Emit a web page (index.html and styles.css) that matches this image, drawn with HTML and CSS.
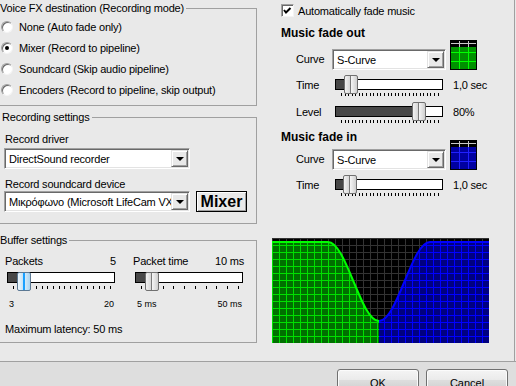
FILE: index.html
```html
<!DOCTYPE html>
<html lang="en">
<head>
    <meta charset="UTF-8">
    <title>Voice FX</title>
    <link rel="stylesheet" href="styles.css">
</head>
<body>
    <div class="dialog">
        <div class="page">
            <div class="left">
                <fieldset class="group voice">
                    <legend>Voice FX destination (Recording mode)</legend>
                    <div class="group-body options">
                        <label class="option"><span class="radio"></span>None (Auto fade only)</label>
                        <label class="option"><span class="radio checked"></span>Mixer (Record to pipeline)</label>
                        <label class="option"><span class="radio"></span>Soundcard (Skip audio pipeline)</label>
                        <label class="option"><span class="radio"></span>Encoders (Record to pipeline, skip output)</label>
                    </div>
                </fieldset>

                <fieldset class="group recording">
                    <legend>Recording settings</legend>
                    <div class="group-body">
                        <div class="field-label">Record driver</div>
                        <div class="combo wide">
                            <span class="combo-text">DirectSound recorder</span>
                            <span class="combo-btn"><i></i></span>
                        </div>
                        <div class="field-label">Record soundcard device</div>
                        <div class="device-row">
                            <div class="combo wide">
                                <span class="combo-text">Μικρόφωνο (Microsoft LifeCam VX-3000)</span>
                                <span class="combo-btn"><i></i></span>
                            </div>
                            <button class="mixer">Mixer</button>
                        </div>
                    </div>
                </fieldset>

                <fieldset class="group buffer">
                    <legend>Buffer settings</legend>
                    <div class="group-body">
                        <div class="buffer-cols">
                            <div class="buffer-col">
                                <div class="buffer-head"><span>Packets</span><span>5</span></div>
                                <div class="slider">
                                    <div class="track"><div class="fill" style="width: 10px"></div></div>
                                    <div class="thumb focus" style="left: 10px"></div>
                                    <div class="ticks" data-count="18"></div>
                                </div>
                                <div class="scale"><span>3</span><span>20</span></div>
                            </div>
                            <div class="buffer-col">
                                <div class="buffer-head"><span>Packet time</span><span>10 ms</span></div>
                                <div class="slider">
                                    <div class="track"><div class="fill" style="width: 10px"></div></div>
                                    <div class="thumb" style="left: 10px"></div>
                                    <div class="ticks" data-count="10"></div>
                                </div>
                                <div class="scale"><span>5 ms</span><span>50 ms</span></div>
                            </div>
                        </div>
                        <div class="latency">Maximum latency: 50 ms</div>
                    </div>
                </fieldset>
            </div>

            <div class="right">
                <label class="check-row">
                    <span class="checkbox">
                        <svg width="11" height="11" viewBox="0 0 11 11"><path d="M2 5l2 2.5L8.5 3" fill="none" stroke="#000" stroke-width="2"/></svg>
                    </span>
                    Automatically fade music
                </label>

                <h2 class="section-title">Music fade out</h2>
                <div class="row curve-row">
                    <span class="row-label">Curve</span>
                    <div class="combo curve">
                        <span class="combo-text">S-Curve</span>
                        <span class="combo-btn"><i></i></span>
                    </div>
                    <svg class="curve-icon" width="27" height="30" viewBox="0 0 27 30">
                        <rect width="27" height="30" fill="#000"/>
                        <rect x="1" y="7" width="25" height="22" fill="#009000"/>
                        <path d="M1 3.5H26M9.5 1V7M18.5 1V7" stroke="#c8c8c8"/>
                        <path d="M1 12.5H26M1 21.5H26M9.5 7V29M18.5 7V29" stroke="#00ff00"/>
                    </svg>
                </div>
                <div class="row slider-row time-out">
                    <span class="row-label">Time</span>
                    <div class="slider">
                        <div class="track"><div class="fill" style="width: 9px"></div></div>
                        <div class="thumb" style="left: 9px"></div>
                        <div class="ticks" data-count="28"></div>
                    </div>
                    <span class="row-value">1,0 sec</span>
                </div>
                <div class="row slider-row level">
                    <span class="row-label">Level</span>
                    <div class="slider">
                        <div class="track"><div class="fill" style="width: 80px"></div></div>
                        <div class="thumb" style="left: 77px"></div>
                        <div class="ticks" data-count="28"></div>
                    </div>
                    <span class="row-value">80%</span>
                </div>

                <h2 class="section-title fade-in">Music fade in</h2>
                <div class="row curve-row">
                    <span class="row-label">Curve</span>
                    <div class="combo curve">
                        <span class="combo-text">S-Curve</span>
                        <span class="combo-btn"><i></i></span>
                    </div>
                    <svg class="curve-icon" width="27" height="30" viewBox="0 0 27 30">
                        <rect width="27" height="30" fill="#000"/>
                        <rect x="1" y="7" width="25" height="22" fill="#0000a0"/>
                        <path d="M1 3.5H26M9.5 1V7M18.5 1V7" stroke="#c8c8c8"/>
                        <path d="M1 12.5H26M1 21.5H26M9.5 7V29M18.5 7V29" stroke="#2020ff"/>
                    </svg>
                </div>
                <div class="row slider-row time-in">
                    <span class="row-label">Time</span>
                    <div class="slider">
                        <div class="track"><div class="fill" style="width: 9px"></div></div>
                        <div class="thumb" style="left: 8px"></div>
                        <div class="ticks" data-count="28"></div>
                    </div>
                    <span class="row-value">1,0 sec</span>
                </div>

                <svg class="graph" width="217" height="105" viewBox="0 0 217 105">
                    <defs>
                        <pattern id="grid-dark" width="7" height="7" patternUnits="userSpaceOnUse">
                            <path d="M0 0.5H7M0.5 0V7" stroke="#333"/>
                        </pattern>
                        <pattern id="grid-green" width="7" height="7" patternUnits="userSpaceOnUse">
                            <path d="M0 0.5H7M0.5 0V7" stroke="#00e000"/>
                        </pattern>
                        <pattern id="grid-blue" width="7" height="7" patternUnits="userSpaceOnUse">
                            <path d="M0 0.5H7M0.5 0V7" stroke="#0000ff"/>
                        </pattern>
                    </defs>
                    <rect width="217" height="105" fill="#000"/>
                    <rect width="217" height="105" fill="url(#grid-dark)"/>
                    <path d="M0 4H56C74.4 4 88.6 83 107 83V105H0Z" fill="#007000"/>
                    <path d="M0 4H56C74.4 4 88.6 83 107 83V105H0Z" fill="url(#grid-green)"/>
                    <path d="M107 83C125.4 83 139.6 4 158 4H217V105H107Z" fill="#000080"/>
                    <path d="M107 83C125.4 83 139.6 4 158 4H217V105H107Z" fill="url(#grid-blue)"/>
                    <path d="M0 4H56C74.4 4 88.6 83 107 83" fill="none" stroke="#00ff00" stroke-width="2"/>
                    <path d="M107 83C125.4 83 139.6 4 158 4H217" fill="none" stroke="#0000ff" stroke-width="2"/>
                </svg>
            </div>
        </div>

        <div class="footer">
            <button class="btn">OK</button>
            <button class="btn">Cancel</button>
        </div>
    </div>

    <script>
        // trackbar tick marks
        document.querySelectorAll('.ticks').forEach(el => {
            for (let i = 0; i < Number(el.dataset.count); i++) {
                el.appendChild(document.createElement('span'));
            }
        });
    </script>
</body>
</html>
```

FILE: styles.css
```css
body {
    margin: 0;
    width: 516px;
    height: 386px;
    overflow: hidden;
    background-color: #e9e9e9;
    font-family: "Liberation Sans", Arial, sans-serif;
    font-size: 11px;
    letter-spacing: -0.2px;
    color: #000;
}

.dialog {
    display: flex;
    flex-direction: column;
    height: 386px;
}

.page {
    display: flex;
    height: 361px;
    flex-shrink: 0;
}

/* left side: group boxes */

.left {
    width: 265px;
    margin-left: -8px;
    padding-top: 2px;
    flex-shrink: 0;
}

.group {
    margin: 0;
    padding: 0;
    border: 1px solid #a0a0a0;
    box-sizing: border-box;
    min-width: 0;
}

.group legend {
    margin-left: 5px;
    padding: 0 2px;
    line-height: 13px;
}

.voice {
    height: 104px;
}

.voice .group-body {
    padding-left: 8px;
}

.recording {
    height: 113px;
    margin-top: 5px;
}

.recording legend {
    margin-left: 7px;
}

.recording .group-body {
    padding-left: 11px;
}

.buffer {
    height: 109px;
    margin-top: 10px;
}

.buffer .group-body {
    padding-left: 12px;
}

.options {
    padding-top: 1px;
}

.option {
    display: flex;
    align-items: center;
    gap: 6px;
    height: 21px;
}

.radio {
    display: flex;
    align-items: center;
    justify-content: center;
    width: 12px;
    height: 12px;
    box-sizing: border-box;
    border-radius: 50%;
    border: 1px solid;
    border-color: #a0a0a0 #f4f4f4 #f4f4f4 #a0a0a0;
    box-shadow: inset 1px 1px 0 #696969;
    background-color: #fff;
}

.radio.checked::after {
    content: "";
    width: 4px;
    height: 4px;
    border-radius: 50%;
    background-color: #000;
}

.field-label {
    margin: 9px 0 0 1px;
    line-height: 13px;
}

.field-label + .combo {
    margin-top: 2px;
}

.combo {
    display: flex;
    align-items: center;
    height: 21px;
    box-sizing: border-box;
    padding: 1px;
    background-color: #fff;
    border: 1px solid;
    border-color: #a0a0a0 #fff #fff #a0a0a0;
    box-shadow: inset 1px 1px 0 #696969, inset -1px -1px 0 #e3e3e3;
}

.combo.wide {
    width: 186px;
}

.combo.curve {
    width: 114px;
}

.combo-text {
    flex: 1;
    min-width: 0;
    overflow: hidden;
    white-space: nowrap;
    padding-left: 3px;
}

.combo-btn {
    display: flex;
    align-items: center;
    justify-content: center;
    width: 17px;
    height: 17px;
    box-sizing: border-box;
    flex-shrink: 0;
    background-color: #e9e9e9;
    border: 1px solid;
    border-color: #e3e3e3 #696969 #696969 #e3e3e3;
    box-shadow: inset 1px 1px 0 #fff, inset -1px -1px 0 #a0a0a0;
}

.combo-btn i {
    width: 0;
    height: 0;
    border-left: 4px solid transparent;
    border-right: 4px solid transparent;
    border-top: 4px solid #000;
    margin-top: 1px;
}

.device-row {
    display: flex;
}

.mixer {
    width: 51px;
    height: 21px;
    margin-left: 6px;
    padding: 0;
    border: 1px solid #000;
    background-color: #e9e9e9;
    box-shadow: inset 1px 1px 0 #fff, inset -1px -1px 0 #a0a0a0;
    font-family: "Liberation Sans", Arial, sans-serif;
    font-size: 16px;
    font-weight: bold;
    letter-spacing: 0;
    color: #000;
}

.buffer-cols {
    display: flex;
    gap: 16px;
}

.buffer-col {
    width: 112px;
}

.buffer-head {
    display: flex;
    justify-content: space-between;
    margin-top: 8px;
    padding-right: 1px;
    line-height: 13px;
}

.buffer-col .slider {
    margin: 2px 0 0 2px;
}

.scale {
    display: flex;
    justify-content: space-between;
    margin-top: 6px;
    padding: 0 3px 0 4px;
    font-size: 9px;
    line-height: 11px;
    letter-spacing: 0;
}

.latency {
    margin-top: 13px;
    line-height: 13px;
}

/* trackbar */

.slider {
    position: relative;
    width: 108px;
    height: 21px;
    flex-shrink: 0;
}

.track {
    margin-top: 4px;
    height: 11px;
    box-sizing: border-box;
    border: 1px solid #000;
    background-color: #fff;
}

.fill {
    height: 100%;
    background-color: #474747;
}

.thumb {
    position: absolute;
    top: 0;
    width: 14px;
    height: 19px;
    box-sizing: border-box;
    border: 1px solid #707070;
    border-radius: 2px;
    background: linear-gradient(to right, #f2f2f2 0, #d6d6d6 42%, #7a7a7a 42%, #7a7a7a 52%, #f4f4f4 52%, #cfcfcf 100%);
}

.thumb.focus {
    border-color: #5b7893;
    background: linear-gradient(to right, #eef7fd 0, #c4e2f6 42%, #19a0ff 42%, #19a0ff 55%, #d6ecfa 55%, #a9d3ef 100%);
}

.ticks {
    display: flex;
    justify-content: space-between;
    width: 98px;
    height: 3px;
    margin: 3px 0 0 6px;
}

.ticks span {
    width: 1px;
    height: 3px;
    background-color: #000;
}

/* right side: fade settings */

.right {
    flex: 1;
    padding-left: 15px;
    margin-right: 1px;
    border-right: 1px solid #a0a0a0;
}

.check-row {
    display: flex;
    align-items: center;
    gap: 4px;
    height: 13px;
    margin: 4px 0 0 9px;
}

.checkbox {
    display: flex;
    width: 13px;
    height: 13px;
    box-sizing: border-box;
    border: 1px solid;
    border-color: #a0a0a0 #f4f4f4 #f4f4f4 #a0a0a0;
    box-shadow: inset 1px 1px 0 #696969;
    background-color: #fff;
}

.section-title {
    margin: 9px 0 0 9px;
    font-size: 12px;
    font-weight: bold;
    line-height: 14px;
    letter-spacing: 0;
}

.section-title.fade-in {
    margin-top: 7px;
}

.row {
    display: flex;
    height: 21px;
    margin-left: 24px;
}

.row-label {
    width: 36px;
    flex-shrink: 0;
}

.curve-row {
    align-items: flex-end;
    margin-top: 9px;
}

.fade-in + .curve-row {
    margin-top: 5px;
}

.curve-row .row-label {
    align-self: stretch;
    line-height: 21px;
}

.curve-icon {
    display: block;
    margin-left: 4px;
    flex-shrink: 0;
}

.slider-row {
    margin-top: 5px;
}

.slider-row .row-label,
.row-value {
    padding-top: 4px;
    line-height: 13px;
}

.slider-row .slider {
    margin-left: 3px;
}

.row-value {
    margin-left: 10px;
}

.level {
    margin-top: 6px;
}

.graph {
    display: block;
    margin-top: 42px;
}

/* bottom buttons */

.footer {
    flex: 1;
    display: flex;
    justify-content: flex-end;
    gap: 7px;
    padding: 7px 8px 0 0;
    border-top: 1px solid #a0a0a0;
    background-color: #dedede;
}

.btn {
    width: 82px;
    height: 23px;
    padding: 4px 0 0;
    border: 1px solid #707070;
    border-radius: 3px;
    background: linear-gradient(#f4f4f4 0, #ebebeb 45%, #dddddd 50%, #cfcfcf 100%);
    box-shadow: inset 0 0 0 1px #fbfbfb;
    font-family: "Liberation Sans", Arial, sans-serif;
    font-size: 11px;
    color: #000;
}
```
